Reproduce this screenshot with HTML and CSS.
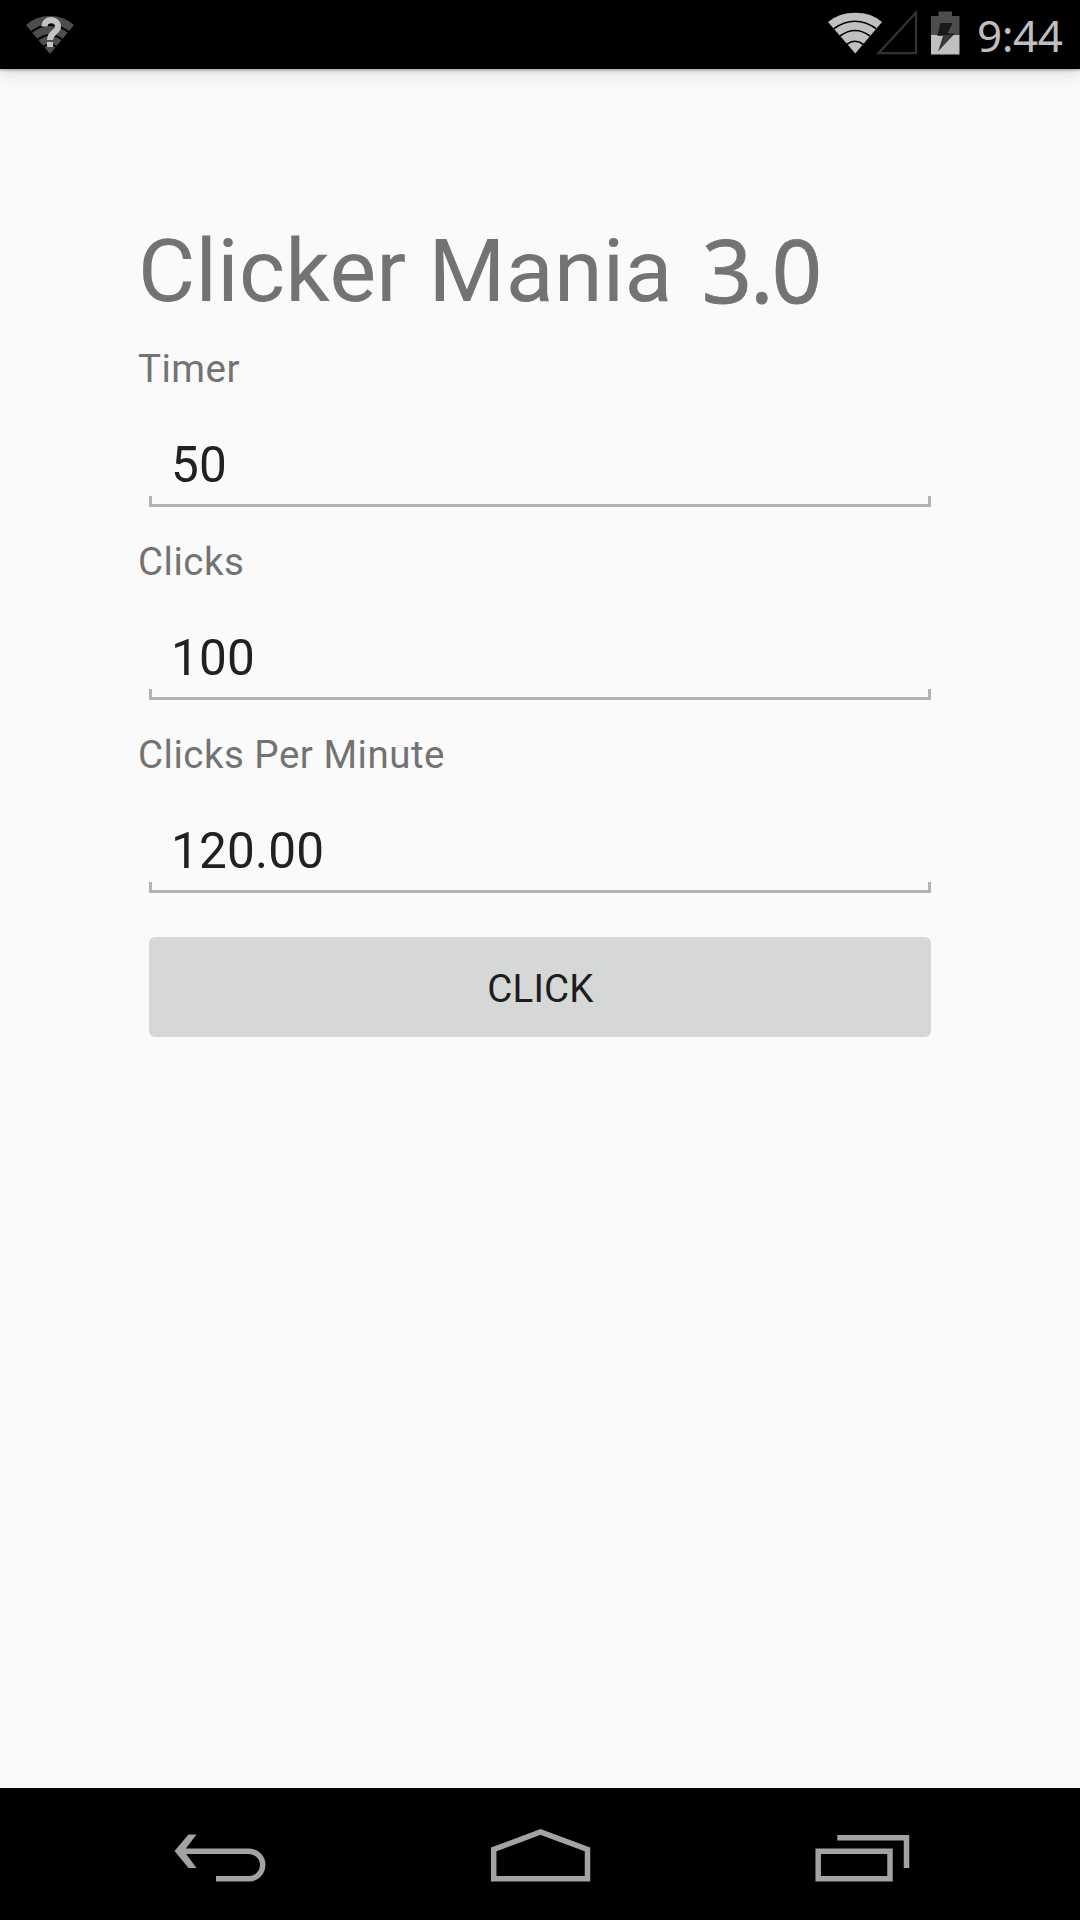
FILE: index.html
```html
<!DOCTYPE html>
<html lang="en">
<head>
<meta charset="utf-8">
<title>Clicker Mania</title>
<link rel="stylesheet" href="styles.css">
</head>
<body>
<header class="status-bar">
  <svg class="wifi-unknown" width="50" height="42" viewBox="0 0 50 42">
    <path fill="#4d4d4d" d="M25 40 1 11Q11 2 25 2T49 11Z"/>
    <g fill="none" stroke="#000" stroke-width="1.7"><path d="M5 19Q25 3 45 19M11 27Q25 15 39 27M17 34Q25 27 33 34"/></g>
    <path fill="none" stroke="#c4c4c4" stroke-width="6" d="M19.5 12.5C19.5 3.5 33 4 33 12.5C33 18.500 25 18 25 26"/>
    <path fill="#c4c4c4" d="M22 28h6v5h-6z"/>
  </svg>
  <div class="status-right">
    <svg width="135" height="48" viewBox="0 0 135 48">
      <path fill="#c0c0c0" d="M27.300 45.500 0 14Q11 4.700 27.300 4.700T54 14Z"/>
      <path fill="none" stroke="#000" stroke-width="1.700" d="M6 20.500Q27 6 48 20.500M12 28Q27 17 42 28M18.500 36.500Q27 30 35.500 36.500"/>
      <path fill="none" stroke="#333" stroke-width="2.200" d="M50.500 45.200H88V4.500Z"/>
      <path fill="#4d4d4d" d="M103 8h7.500V3.500h13.500V8H131.500V27H103Z"/>
      <path fill="#c0c0c0" d="M103 27h28.500v19.500H103z"/>
      <path fill="#1a1a1a" d="M112.500 15H124.500L119.500 25.500H126.500L125.500 27H109.500Z"/>
      <path fill="#3a3a3a" d="M109.500 27H125.500L110 43.500 115 28H109.500Z"/>
    </svg>
    <span class="clock">9:44</span>
  </div>
</header>
<main class="content">
  <h1 class="title">Clicker Mania <span class="version">3.0</span></h1>
  <div class="fields">
    <div class="field"><div class="label">Timer</div><div class="value">50</div></div>
    <div class="field"><div class="label">Clicks</div><div class="value">100</div></div>
    <div class="field"><div class="label">Clicks Per Minute</div><div class="value">120.00</div></div>
  </div>
  <button class="click-button" type="button">CLICK</button>
</main>
<nav class="nav-bar">
  <svg width="100" height="60" viewBox="170 1825 100 60"><path d="M180 1851.300H249A13.600 13.600 0 0 1 249 1878.700H216"/><path class="solid" d="M174.500 1851 188.500 1834.500H196.500L184 1851 196.500 1868H188.500Z"/></svg>
  <svg width="110" height="60" viewBox="485 1825 110 60"><path d="M493.700 1878.700V1849.500L540.500 1832 587.500 1849.500V1878.700Z"/></svg>
  <svg width="110" height="60" viewBox="810 1825 110 60"><path d="M818.200 1851.300H890V1878.700H818.200ZM837.300 1837.700H906.500V1868"/></svg>
</nav>
</body>
</html>
```
FILE: styles.css
```css
* { box-sizing: border-box; }
body {
  margin: 0;
  width: 1080px;
  height: 1920px;
  display: flex;
  flex-direction: column;
  background: #fafafa;
  color: #737373;
  font-family: Roboto, sans-serif;
  overflow: hidden;
}
.status-bar {
  height: 69px;
  flex: none;
  display: flex;
  justify-content: space-between;
  background: #000;
  box-shadow: 0 1px 3px rgba(0, 0, 0, .35), 0 5px 16px rgba(0, 0, 0, .12);
}
.wifi-unknown { margin: 14px 0 0 25px; }
.status-right {
  display: flex;
  padding: 8px 16px 0 0;
}
.clock {
  width: 87px;
  margin-left: 14px;
  color: #bebebe;
  font: 44px/54px "Noto Sans", sans-serif;
  letter-spacing: -.5px;
}
.content {
  flex: 1;
  display: flex;
  flex-direction: column;
  padding: 150px 138px 0;
}
.title {
  height: 104px;
  margin: 0;
  font-size: 88px;
  font-weight: 400;
  line-height: 104px;
  letter-spacing: .3px;
  white-space: nowrap;
}
.version {
  margin-left: 7px;
  font-family: "Noto Sans", sans-serif;
  line-height: 1;
  letter-spacing: -2px;
  vertical-align: -2px;
  -webkit-text-stroke: .8px #737373;
}
.fields {
  display: grid;
  gap: 32px;
  margin-top: 23px;
}
.field { height: 161px; position: relative; }
.label { font-size: 38.5px; line-height: 46px; letter-spacing: .5px; }
.value {
  padding: 43px 33px 0;
  color: #212121;
  font-size: 49.5px;
  line-height: 60px;
  letter-spacing: .2px;
}
.value::after {
  content: "";
  position: absolute;
  inset: auto 11px 0;
  height: 8px;
  border: solid #b2b2b2;
  border-width: 0 3px 3px;
}
.click-button {
  height: 100px;
  margin: 44px 11px 0;
  padding: 3px 0 0 1px;
  border: 0;
  border-radius: 6px;
  background: #d6d8d7;
  color: #1d1d1d;
  font: 38.5px/46px Roboto, sans-serif;
  letter-spacing: .2px;
}
.nav-bar {
  height: 132px;
  flex: none;
  display: flex;
  justify-content: space-between;
  padding: 37px 160px 0 170px;
  background: #000;
}
.nav-bar path { fill: none; stroke: #a3a3a3; stroke-width: 5.5; }
.nav-bar .solid { fill: #a3a3a3; stroke: none; }
```
